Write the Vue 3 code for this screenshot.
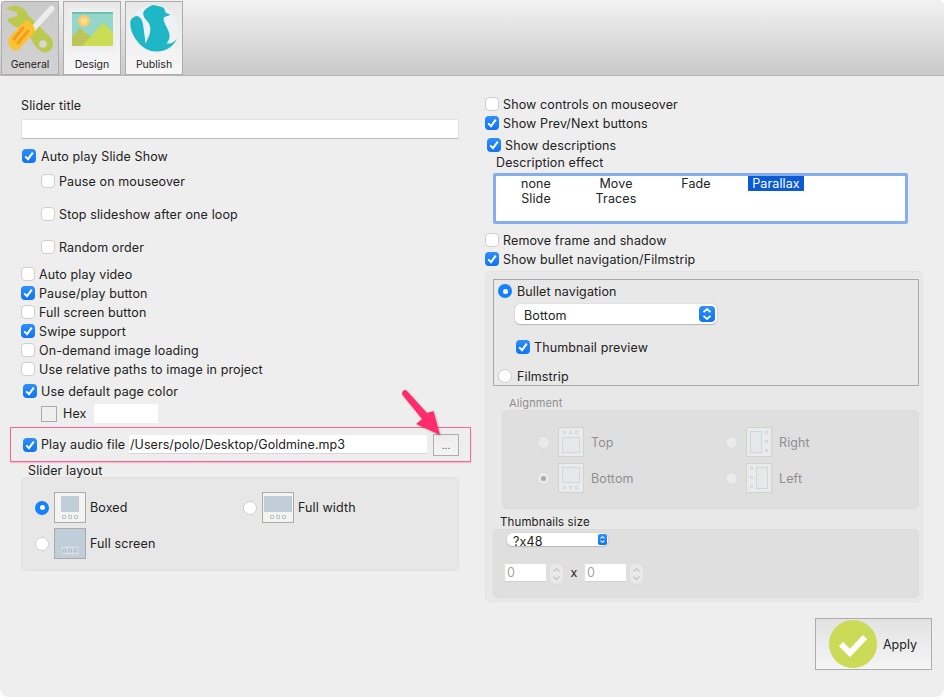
<script setup>
const autoRows = [
  { label: 'Auto play video', on: false },
  { label: 'Pause/play button', on: true },
  { label: 'Full screen button', on: false },
  { label: 'Swipe support', on: true },
  { label: 'On-demand image loading', on: false },
  { label: 'Use relative paths to image in project', on: false }
]
const subRows = [
  { label: 'Pause on mouseover', cls: 'first' },
  { label: 'Stop slideshow after one loop', cls: '' },
  { label: 'Random order', cls: '' }
]
const effects = ['none', 'Move', 'Fade', 'Parallax', 'Slide', 'Traces']
</script>

<template>
  <div class="window">
    <header class="toolbar">
      <button class="tab active">
        <svg class="tab-icon" width="56" height="52" viewBox="0 0 56 52">
          <path d="M4 7 C10 2 19 3 24 9 L26 13 L49 36 C53 41 51 48 45 50 C40 51 37 48 33 44 L23 26 C16 27 9 24 5 17 L15 14 V10 Z" fill="#bcc94f" />
          <circle cx="41" cy="42" r="3.800" fill="#d7d7d7" />
          <path d="M29 25 L48 4 C49.500 2.500 52 4.500 52.500 6 C53 7.500 52 8.500 51 9.500 L33 29 Z" fill="#ececec" />
          <path d="M23 19 C25 18 27 19 28 20 L32 25 C33 27 33 29 32 31 L17 47 C15 49 12 49 10 47 L7 43 C6 41 6 38 7 36 Z" fill="#fcc22d" />
          <path d="M21 26 L12 37 M26 29 L16 41" stroke="#f59b25" stroke-width="3" stroke-linecap="round" fill="none" />
        </svg>
        <span>General</span>
      </button>
      <button class="tab">
        <svg class="tab-icon" width="56" height="52" viewBox="0 0 56 52">
          <rect x="4" y="6" width="48" height="42" rx="3" fill="#eeeeee" />
          <rect x="8" y="10" width="41" height="34" fill="#94d6c9" />
          <rect x="8" y="10" width="41" height="2" fill="#6cc2b3" />
          <circle cx="20" cy="19" r="6" fill="#f5cc6b" />
          <circle cx="20" cy="19" r="3.400" fill="#f8dc8f" />
          <path d="M8 44 V35 L16 26 L28 36 L35 44 Z" fill="#bdc45a" />
          <path d="M18 44 L39 21 L49 30 V44 Z" fill="#cbdc55" />
        </svg>
        <span>Design</span>
      </button>
      <button class="tab">
        <svg class="tab-icon" width="56" height="52" viewBox="0 0 56 52">
          <g transform="translate(-126 -2) scale(.3333)">
            <circle cx="462" cy="85" r="71" fill="#eef1f3" />
            <path d="M458 15 C472 16 485 20 492 24 L497 38 L512 44 L492 52 C488 62 497 74 504 90 C512 106 510 118 500 130 C510 133 520 128 531 116 C522 135 505 150 480 154 C455 158 430 148 412 124 C396 104 388 80 392 60 C396 54 404 48 412 48 C420 50 426 58 429 72 C432 92 434 112 437 131 C441 120 447 110 450 98 C453 84 450 72 442 64 C434 56 428 46 430 36 C436 26 446 20 458 15 Z" fill="#1fb6c5" />
          </g>
        </svg>
        <span>Publish</span>
      </button>
    </header>

    <main class="content">
      <section class="col-left">
        <div class="lbl title-lbl">Slider title</div>
        <input class="field title-field" type="text" />
        <label class="row auto-slide">
          <span class="cb on"><svg viewBox="0 0 14 14"><path d="M3.2 7.4 L6 10.2 L10.8 3.6" /></svg></span>
          <span>Auto play Slide Show</span>
        </label>
        <label v-for="r in subRows" :key="r.label" class="row sub" :class="r.cls">
          <span class="cb"></span><span>{{ r.label }}</span>
        </label>
        <div class="plain-rows">
          <label v-for="r in autoRows" :key="r.label" class="row plain">
            <span class="cb" :class="{ on: r.on }"><svg v-if="r.on" viewBox="0 0 14 14"><path d="M3.2 7.4 L6 10.2 L10.8 3.6" /></svg></span>
            <span>{{ r.label }}</span>
          </label>
        </div>
        <label class="row page-color">
          <span class="cb on"><svg viewBox="0 0 14 14"><path d="M3.2 7.4 L6 10.2 L10.8 3.6" /></svg></span>
          <span>Use default page color</span>
        </label>
        <div class="hex-row">
          <span class="swatch"></span>
          <span class="hex-lbl">Hex</span>
          <span class="hex-field"></span>
        </div>
        <div class="audio">
          <span class="cb on"><svg viewBox="0 0 14 14"><path d="M3.2 7.4 L6 10.2 L10.8 3.6" /></svg></span>
          <span class="audio-lbl">Play audio file</span>
          <span class="audio-path">/Users/polo/Desktop/Goldmine.mp3</span>
          <button class="browse">...</button>
        </div>
        <div class="lbl layout-lbl">Slider layout</div>
        <div class="group layout-group">
          <label class="choice">
            <span class="radio on"></span>
            <svg class="thumb" width="32" height="31" viewBox="0 0 32 31">
              <rect x=".5" y=".5" width="31" height="30" fill="#f3f3ef" stroke="#ababab" />
              <rect x="7" y="4" width="18" height="16" fill="#bfced9" />
              <path d="M8.500 23.500h3v3h-3zM14.500 23.500h3v3h-3zM20.500 23.500h3v3h-3z" fill="none" stroke="#b5c3cd" />
            </svg>
            <span>Boxed</span>
          </label>
          <label class="choice">
            <span class="radio"></span>
            <svg class="thumb" width="32" height="31" viewBox="0 0 32 31">
              <rect x=".5" y=".5" width="31" height="30" fill="#f3f3ef" stroke="#ababab" />
              <rect x="2" y="4" width="28" height="16" fill="#bfced9" />
              <path d="M8.500 23.500h3v3h-3zM14.500 23.500h3v3h-3zM20.500 23.500h3v3h-3z" fill="none" stroke="#b5c3cd" />
            </svg>
            <span>Full width</span>
          </label>
          <label class="choice">
            <span class="radio"></span>
            <svg class="thumb" width="32" height="31" viewBox="0 0 32 31">
              <rect x=".5" y=".5" width="31" height="30" fill="#bfced9" stroke="#ababab" />
              <path d="M7.500 18.500h17v8h-17z" fill="#d5dee4" />
              <path d="M9 21h3v3H9zM14.500 21h3v3h-3zM20 21h3v3h-3z" fill="none" stroke="#a9b9c4" />
            </svg>
            <span>Full screen</span>
          </label>
        </div>
      </section>

      <section class="col-right">
        <label class="row plain"><span class="cb"></span><span>Show controls on mouseover</span></label>
        <label class="row plain">
          <span class="cb on"><svg viewBox="0 0 14 14"><path d="M3.2 7.4 L6 10.2 L10.8 3.6" /></svg></span>
          <span>Show Prev/Next buttons</span>
        </label>
        <label class="row desc">
          <span class="cb on"><svg viewBox="0 0 14 14"><path d="M3.2 7.4 L6 10.2 L10.8 3.6" /></svg></span>
          <span>Show descriptions</span>
        </label>
        <div class="lbl effect-lbl">Description effect</div>
        <div class="effects">
          <span v-for="e in effects" :key="e" class="effect" :class="{ sel: e === 'Parallax' }">{{ e }}</span>
        </div>
        <label class="row plain remove"><span class="cb"></span><span>Remove frame and shadow</span></label>
        <label class="row plain">
          <span class="cb on"><svg viewBox="0 0 14 14"><path d="M3.2 7.4 L6 10.2 L10.8 3.6" /></svg></span>
          <span>Show bullet navigation/Filmstrip</span>
        </label>

        <div class="panel">
          <div class="nav-box">
            <label class="row nav-radio"><span class="radio on"></span><span>Bullet navigation</span></label>
            <div class="select big">
              <span class="select-text">Bottom</span>
              <span class="chip">
                <svg viewBox="0 0 16 16"><path d="M4.500 6.200 L8 3 L11.500 6.200 M4.500 9.800 L8 13 L11.500 9.800" /></svg>
              </span>
            </div>
            <label class="row thumb-prev">
              <span class="cb on"><svg viewBox="0 0 14 14"><path d="M3.2 7.4 L6 10.2 L10.8 3.6" /></svg></span>
              <span>Thumbnail preview</span>
            </label>
            <label class="row nav-radio film"><span class="radio"></span><span>Filmstrip</span></label>
          </div>

          <div class="lbl align-lbl">Alignment</div>
          <div class="group align-group">
            <label class="choice dim">
              <span class="radio dis"></span>
              <svg class="thumb" width="26" height="30" viewBox="0 0 26 30">
                <rect x=".5" y=".5" width="25" height="29" fill="#eaeaea" stroke="#d2d2d2" />
                <rect x="4.500" y="10.500" width="17" height="15" fill="#e7e9e9" stroke="#cdd7dd" />
                <path d="M5.500 4.500h2v2h-2zM11.500 4.500h2v2h-2zM17.500 4.500h2v2h-2z" fill="none" stroke="#cdd7dd" />
              </svg>
              <span>Top</span>
            </label>
            <label class="choice dim">
              <span class="radio dis"></span>
              <svg class="thumb" width="26" height="30" viewBox="0 0 26 30">
                <rect x=".5" y=".5" width="25" height="29" fill="#eaeaea" stroke="#d2d2d2" />
                <rect x="4.500" y="4.500" width="11" height="21" fill="#e7e9e9" stroke="#cdd7dd" />
                <path d="M19.500 4.500h2v2h-2zM19.500 13.500h2v2h-2zM19.500 22.500h2v2h-2z" fill="none" stroke="#cdd7dd" />
              </svg>
              <span>Right</span>
            </label>
            <label class="choice dim">
              <span class="radio dis dot"></span>
              <svg class="thumb" width="26" height="30" viewBox="0 0 26 30">
                <rect x=".5" y=".5" width="25" height="29" fill="#eaeaea" stroke="#d2d2d2" />
                <rect x="4.500" y="4.500" width="17" height="15" fill="#e7e9e9" stroke="#cdd7dd" />
                <path d="M5.500 23.500h2v2h-2zM11.500 23.500h2v2h-2zM17.500 23.500h2v2h-2z" fill="none" stroke="#cdd7dd" />
              </svg>
              <span>Bottom</span>
            </label>
            <label class="choice dim">
              <span class="radio dis"></span>
              <svg class="thumb" width="26" height="30" viewBox="0 0 26 30">
                <rect x=".5" y=".5" width="25" height="29" fill="#eaeaea" stroke="#d2d2d2" />
                <rect x="10.500" y="4.500" width="11" height="21" fill="#e7e9e9" stroke="#cdd7dd" />
                <path d="M4.500 4.500h2v2h-2zM4.500 13.500h2v2h-2zM4.500 22.500h2v2h-2z" fill="none" stroke="#cdd7dd" />
              </svg>
              <span>Left</span>
            </label>
          </div>

          <div class="lbl size-lbl">Thumbnails size</div>
          <div class="group size-group">
            <div class="select small">
              <span>?x48</span>
              <span class="chip">
                <svg viewBox="0 0 16 16"><path d="M4.500 6.200 L8 3 L11.500 6.200 M4.500 9.800 L8 13 L11.500 9.800" /></svg>
              </span>
            </div>
            <div class="size-inputs">
              <span class="num">0</span>
              <span class="stepper"><svg viewBox="0 0 13 20"><path d="M3.500 7.500 L6.500 4.500 L9.500 7.500 M3.500 12.500 L6.500 15.500 L9.500 12.500" /></svg></span>
              <span class="times">x</span>
              <span class="num">0</span>
              <span class="stepper"><svg viewBox="0 0 13 20"><path d="M3.500 7.500 L6.500 4.500 L9.500 7.500 M3.500 12.500 L6.500 15.500 L9.500 12.500" /></svg></span>
            </div>
          </div>
        </div>

        <button class="apply">
          <svg width="48" height="48" viewBox="0 0 48 48">
            <circle cx="24" cy="24" r="24" fill="#cbdb58" />
            <path d="M12 24 L21 33 L36 17" fill="none" stroke="#fff" stroke-width="6" />
          </svg>
          <span>Apply</span>
        </button>
      </section>
    </main>

    <svg class="arrow" width="50" height="56" viewBox="0 0 50 56">
      <path d="M2.500 3.500 C3.500 2 5.500 1.500 6.500 2.500 L27 25 L33.500 23 L40 47 L16 36 L22 31 L2.500 7 C2 6 2 4.500 2.500 3.500 Z" fill="#ff2c6d" />
    </svg>
  </div>
</template>

<style scoped>
.window {
  position: relative;
  width: 944px;
  height: 697px;
  background: #eeeeee;
  border-radius: 6px 6px 9px 9px;
  overflow: hidden;
  font-family: Inter, "Liberation Sans", sans-serif;
  font-size: 12.5px;
  letter-spacing: .12px;
  color: #222;
}
.toolbar {
  display: flex;
  gap: 4px;
  height: 76px;
  box-sizing: border-box;
  padding: 1px 0 0 1px;
  background: linear-gradient(#f2f2f2, #c9c9c9);
  border-bottom: 1px solid #b5b5b5;
}
.tab {
  display: flex;
  flex-direction: column;
  align-items: center;
  width: 58px;
  height: 74px;
  box-sizing: border-box;
  padding: 0;
  border: 1px solid #adadad;
  background: linear-gradient(#e8e8e8, #f7f7f7);
  font: inherit;
  font-size: 10.5px;
  letter-spacing: 0;
  color: #222;
}
.tab.active { background: linear-gradient(#cacaca, #d2d2d2); }
.tab-icon { flex: none; }
.tab span { margin-top: 4px; line-height: 14px; }
.content {
  display: flex;
  padding: 19px 0 0 21px;
}
.col-left { width: 438px; margin-right: 26px; }
.col-right { width: 447px; display: flex; flex-direction: column; }
.lbl { line-height: 15px; }
.title-lbl { margin-top: 3px; line-height: 16px; }
.field {
  display: block;
  width: 100%;
  height: 20px;
  box-sizing: border-box;
  margin: 5px 0 0;
  padding: 0;
  border: 1px solid #e3e3e3;
  border-bottom-color: #bdbdbd;
  background: #fff;
}
.row {
  display: flex;
  align-items: center;
  height: 18px;
  gap: 4px;
}
.auto-slide { margin: 8px 0 0 1px; gap: 5px; }
.sub { margin: 15px 0 0 20px; }
.sub.first { margin-top: 7px; }
.plain-rows { margin-top: 9px; display: flex; flex-direction: column; gap: 1px; }
.plain { height: 18px; margin-bottom: 1px; }
.plain-rows .plain { margin-bottom: 0; }
.page-color { margin: 4px 0 0 2px; }
.cb {
  flex: none;
  width: 14px;
  height: 14px;
  box-sizing: border-box;
  border: 1px solid #cfcfcf;
  border-radius: 4px;
  background: #fff;
}
.cb.on {
  border: 0;
  background: linear-gradient(#2e8efc, #0f74f2);
}
.cb svg { display: block; width: 14px; height: 14px; }
.cb path { fill: none; stroke: #fff; stroke-width: 2; }
.hex-row {
  display: flex;
  align-items: center;
  height: 19px;
  margin: 4px 0 0 20px;
}
.swatch {
  width: 16px;
  height: 16px;
  box-sizing: border-box;
  border: 1px solid #ababab;
  background: #efefef;
}
.hex-lbl { margin-left: 6px; width: 31px; }
.hex-field { width: 64px; height: 19px; background: #fff; }
.audio {
  display: flex;
  align-items: center;
  width: 461px;
  height: 35px;
  box-sizing: border-box;
  margin: 4px 0 0 -11px;
  padding-left: 12px;
  border: 1px solid #f3689a;
  box-shadow: 0 1px 1px #f9b8ce;
}
.audio-lbl { margin-left: 4px; width: 88px; white-space: nowrap; }
.audio-path {
  width: 298px;
  height: 19px;
  box-sizing: border-box;
  padding-left: 1px;
  line-height: 19px;
  letter-spacing: .06px;
  background: #fff;
  border-bottom: 1px solid #d6d6d6;
  white-space: nowrap;
}
.browse {
  width: 26px;
  height: 22px;
  box-sizing: border-box;
  margin-left: 6px;
  padding: 0 0 0;
  border: 1px solid #adadad;
  background: linear-gradient(#ececec, #f5f5f5);
  font: inherit;
  font-size: 10px;
  color: #333;
}
.layout-lbl { margin: 2px 0 0 7px; line-height: 13px; }
.group {
  box-sizing: border-box;
  border: 1px solid #e0e0e0;
  border-radius: 5px;
  background: #e7e7e7;
}
.layout-group {
  display: grid;
  grid-template-columns: 208px 208px;
  row-gap: 5px;
  align-content: start;
  height: 94px;
  padding: 14px 0 0 13px;
}
.choice { display: flex; align-items: center; height: 31px; }
.choice .thumb { margin: 0 4px 0 5px; flex: none; }
.radio {
  flex: none;
  position: relative;
  width: 14px;
  height: 14px;
  box-sizing: border-box;
  border: 1px solid #cfcfcf;
  border-radius: 50%;
  background: #fff;
}
.radio.on { border: 0; background: #1580fb; }
.radio.on::after {
  content: "";
  position: absolute;
  left: 4.500px;
  top: 4.500px;
  width: 5px;
  height: 5px;
  border-radius: 50%;
  background: #fff;
}
.radio.dis {
  width: 13px;
  height: 13px;
  border-color: #dadada;
  background: #eaeaea;
}
.radio.dot::after {
  content: "";
  position: absolute;
  left: 3px;
  top: 3px;
  width: 5px;
  height: 5px;
  border-radius: 50%;
  background: #a8a8a8;
}
.desc { margin: 4px 0 0 2px; }
.effect-lbl { margin-left: 11px; padding-top: 2px; line-height: 14px; }
.effects {
  display: grid;
  grid-template-columns: repeat(4, 80px);
  grid-auto-rows: 15px;
  justify-items: center;
  width: 415px;
  height: 51px;
  box-sizing: border-box;
  margin: 3px 0 0 8px;
  padding: 0;
  border: 3px solid #85aef0;
  border-radius: 2px;
  background: #fff;
}
.effect { line-height: 15px; }
.effect.sel {
  padding: 0 4px;
  background: #0b5bd3;
  color: #fff;
}
.remove { margin-top: 7px; }
.col-right > .plain:not(.remove) { margin-bottom: 0; }
.col-right > .remove { margin-bottom: 1px; }
.col-right > .plain:first-child { margin-bottom: 1px; }
.panel {
  width: 438px;
  height: 331px;
  box-sizing: border-box;
  margin-top: 3px;
  padding: 7px 3px 0 7px;
  border: 1px solid #e3e3e3;
  border-radius: 5px;
  background: #e8e8e8;
}
.nav-box {
  height: 107px;
  box-sizing: border-box;
  padding: 2px 0 0 4px;
  border: 1px solid #a9a9a9;
}
.nav-radio { gap: 5px; }
.film { margin-top: 11px; }
.select {
  display: flex;
  align-items: center;
  justify-content: space-between;
  box-sizing: border-box;
  border-radius: 5px;
  background: #fff;
  box-shadow: 0 0 1px #9b9b9b, 0 1px 1px #bbb;
  overflow: hidden;
}
.select.big {
  width: 202px;
  height: 20px;
  margin: 4px 0 0 17px;
  padding: 0 2px 0 9px;
}
.select-text { padding-top: 2px; }
.chip {
  display: flex;
  align-items: center;
  justify-content: center;
  border-radius: 4px;
  background: linear-gradient(#2e8efc, #0f74f2);
}
.big .chip { width: 16px; height: 16px; }
.chip svg { width: 100%; height: 100%; }
.chip path { fill: none; stroke: #fff; stroke-width: 1.800; }
.thumb-prev { margin: 14px 0 0 18px; }
.align-lbl {
  margin: 11px 0 0 16px;
  line-height: 13px;
  font-size: 11px;
  color: #8e8e8e;
}
.align-group {
  display: grid;
  grid-template-columns: 188px 188px;
  row-gap: 6px;
  align-content: start;
  width: 417px;
  height: 99px;
  margin-left: 9px;
  padding: 16px 0 0 34px;
  background: #dfdfdf;
  border-color: #dbdbdb;
}
.dim { height: 30px; color: #8f8f8f; }
.dim .thumb { margin: 0 7px 0 8px; }
.size-lbl { margin: 7px 0 0 7px; line-height: 13px; font-size: 11.500px; }
.size-group {
  height: 69px;
  padding: 3px 0 0 13px;
  background: #dfdfdf;
  border-color: #dbdbdb;
}
.select.small {
  width: 101px;
  height: 13px;
  padding: 0 1px 0 6px;
  line-height: 17px;
  align-items: flex-start;
}
.small .chip { width: 9px; height: 11px; margin-top: 1px; border-radius: 2px; }
.size-inputs {
  display: flex;
  align-items: flex-start;
  margin: 18px 0 0 -2px;
}
.num {
  width: 41px;
  height: 18px;
  box-sizing: border-box;
  padding-left: 2px;
  line-height: 18px;
  background: #fff;
  border-bottom: 1px solid #d0d0d0;
  color: #a3a3a3;
}
.stepper {
  width: 13px;
  height: 20px;
  margin-left: 4px;
  border-radius: 5px;
  background: #e9e9e9;
  box-shadow: 0 0 1px #c8c8c8;
}
.stepper svg { display: block; width: 13px; height: 20px; }
.stepper path { fill: none; stroke: #c4c4c4; stroke-width: 1.200; }
.times { width: 22px; text-align: center; line-height: 18px; }
.apply {
  display: flex;
  align-items: center;
  align-self: flex-end;
  width: 117px;
  height: 52px;
  box-sizing: border-box;
  margin: 16px 0 0;
  padding: 0 0 0 13px;
  border: 1px solid #adadad;
  background: linear-gradient(#e2e2e2, #f5f5f5);
  font: inherit;
  color: #222;
}
.apply span { margin-left: 6px; }
.arrow {
  position: absolute;
  left: 400px;
  top: 388px;
  filter: drop-shadow(1px 1px 1px rgba(0, 0, 0, .25));
}
</style>

<style>
html, body { background: #fff; }
</style>
